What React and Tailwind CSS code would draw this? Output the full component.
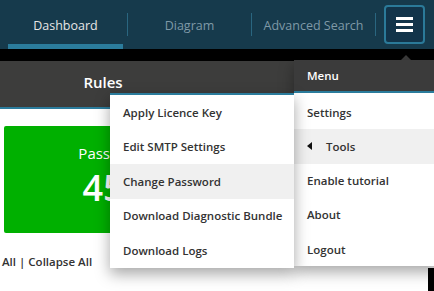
import { useState } from 'react';

const tabs = ['Dashboard', 'Diagram', 'Advanced Search'];

const menuItems = ['Settings', 'Tools', 'Enable tutorial', 'About', 'Logout'];

const toolItems = [
  'Apply Licence Key',
  'Edit SMTP Settings',
  'Change Password',
  'Download Diagnostic Bundle',
  'Download Logs',
];

const App = () => {
  const [active] = useState('Dashboard');

  return (
    <div
      className="relative w-[434px] h-[291px] overflow-hidden bg-white text-[11.5px]"
      style={{ fontFamily: '"Open Sans", "Liberation Sans", sans-serif' }}
    >
      {/* Top nav */}
      <nav className="h-[49px] bg-[#163a4c] flex items-stretch pl-[4px] text-[12.5px]">
        {tabs.map((t) => (
          <div key={t} className="flex items-stretch">
            <div className="relative w-[123px] flex items-center justify-center pt-[3px]">
              <span className={t === active ? 'text-[#e6e6e6]' : 'text-[#7f99a7]'}>{t}</span>
              {t === active && (
                <span className="absolute left-[4px] right-[4px] bottom-0 h-[5px] bg-[#2b7c9c]" />
              )}
            </div>
            <div className="w-px my-[13px] bg-[#2a6680]" />
          </div>
        ))}
        {/* Hamburger */}
        <div className="ml-[8px] flex items-center">
          <button className="w-[41px] h-[39px] rounded-[4px] border-2 border-[#2b7a99] bg-[#12344a] flex flex-col items-center justify-center gap-[3px]">
            <span className="block w-[17px] h-[3px] bg-white" />
            <span className="block w-[17px] h-[3px] bg-white" />
            <span className="block w-[17px] h-[3px] bg-white" />
          </button>
        </div>
      </nav>

      {/* Black strip */}
      <div className="h-[12px] bg-black" />

      {/* Rules band */}
      <div className="h-[48px] bg-[#3d3d3c] border-b-2 border-[#2b7c9c] flex">
        <div className="w-[206px] flex items-center justify-center pb-[3px]">
          <span className="text-white text-[15px] font-semibold">Rules</span>
        </div>
      </div>

      {/* Content */}
      <div className="px-[4px] pt-[17px]">
        <div className="w-[198px] h-[107px] bg-[#00b000] rounded-[2px] flex flex-col items-center pt-[16px] text-white">
          <span className="text-[15px] leading-[22px]">Passed</span>
          <span className="text-[36px] leading-[44px] mt-[2px] font-semibold">45</span>
        </div>
        <div className="mt-[20px] -ml-[2px] text-[#333] font-semibold">All | Collapse All</div>
      </div>

      {/* Menu caret */}
      <div className="absolute left-[400px] top-[55px] w-0 h-0 border-l-[6px] border-r-[6px] border-b-[6px] border-l-transparent border-r-transparent border-b-[#3b3b3b]" />

      {/* Main menu */}
      <div className="absolute left-[294px] top-[60px] w-[150px] bg-white shadow-[0_6px_14px_rgba(0,0,0,0.35)]">
        <div className="h-[33px] bg-[#3b3b3b] border-b-2 border-[#2b7c9c] flex items-center px-[13px] text-white font-semibold">
          Menu
        </div>
        <div className="pt-[2px]">
          {menuItems.map((m) => (
            <div
              key={m}
              className={`h-[34.3px] flex items-center px-[13px] text-[#333] font-semibold ${
                m === 'Tools' ? 'bg-[#f0f0f0]' : ''
              }`}
            >
              {m === 'Tools' && (
                <span className="mr-[14px] w-0 h-0 border-t-[4px] border-b-[4px] border-r-[5px] border-t-transparent border-b-transparent border-r-[#111]" />
              )}
              {m}
            </div>
          ))}
        </div>
      </div>

      {/* Tools submenu */}
      <div className="absolute left-[110px] top-[93px] w-[184px] bg-white border-t-2 border-[#2b7c9c] shadow-[0_6px_14px_rgba(0,0,0,0.35)]">
        {toolItems.map((m) => (
          <div
            key={m}
            className={`h-[34.6px] flex items-center px-[13px] text-[#333] font-semibold whitespace-nowrap ${
              m === 'Change Password' ? 'bg-[#f0f0f0]' : ''
            }`}
          >
            {m}
          </div>
        ))}
      </div>

      {/* Edge block */}
      <div className="absolute left-[428px] top-[268px] w-[6px] h-[23px] bg-black" />
    </div>
  );
};

export default App;
